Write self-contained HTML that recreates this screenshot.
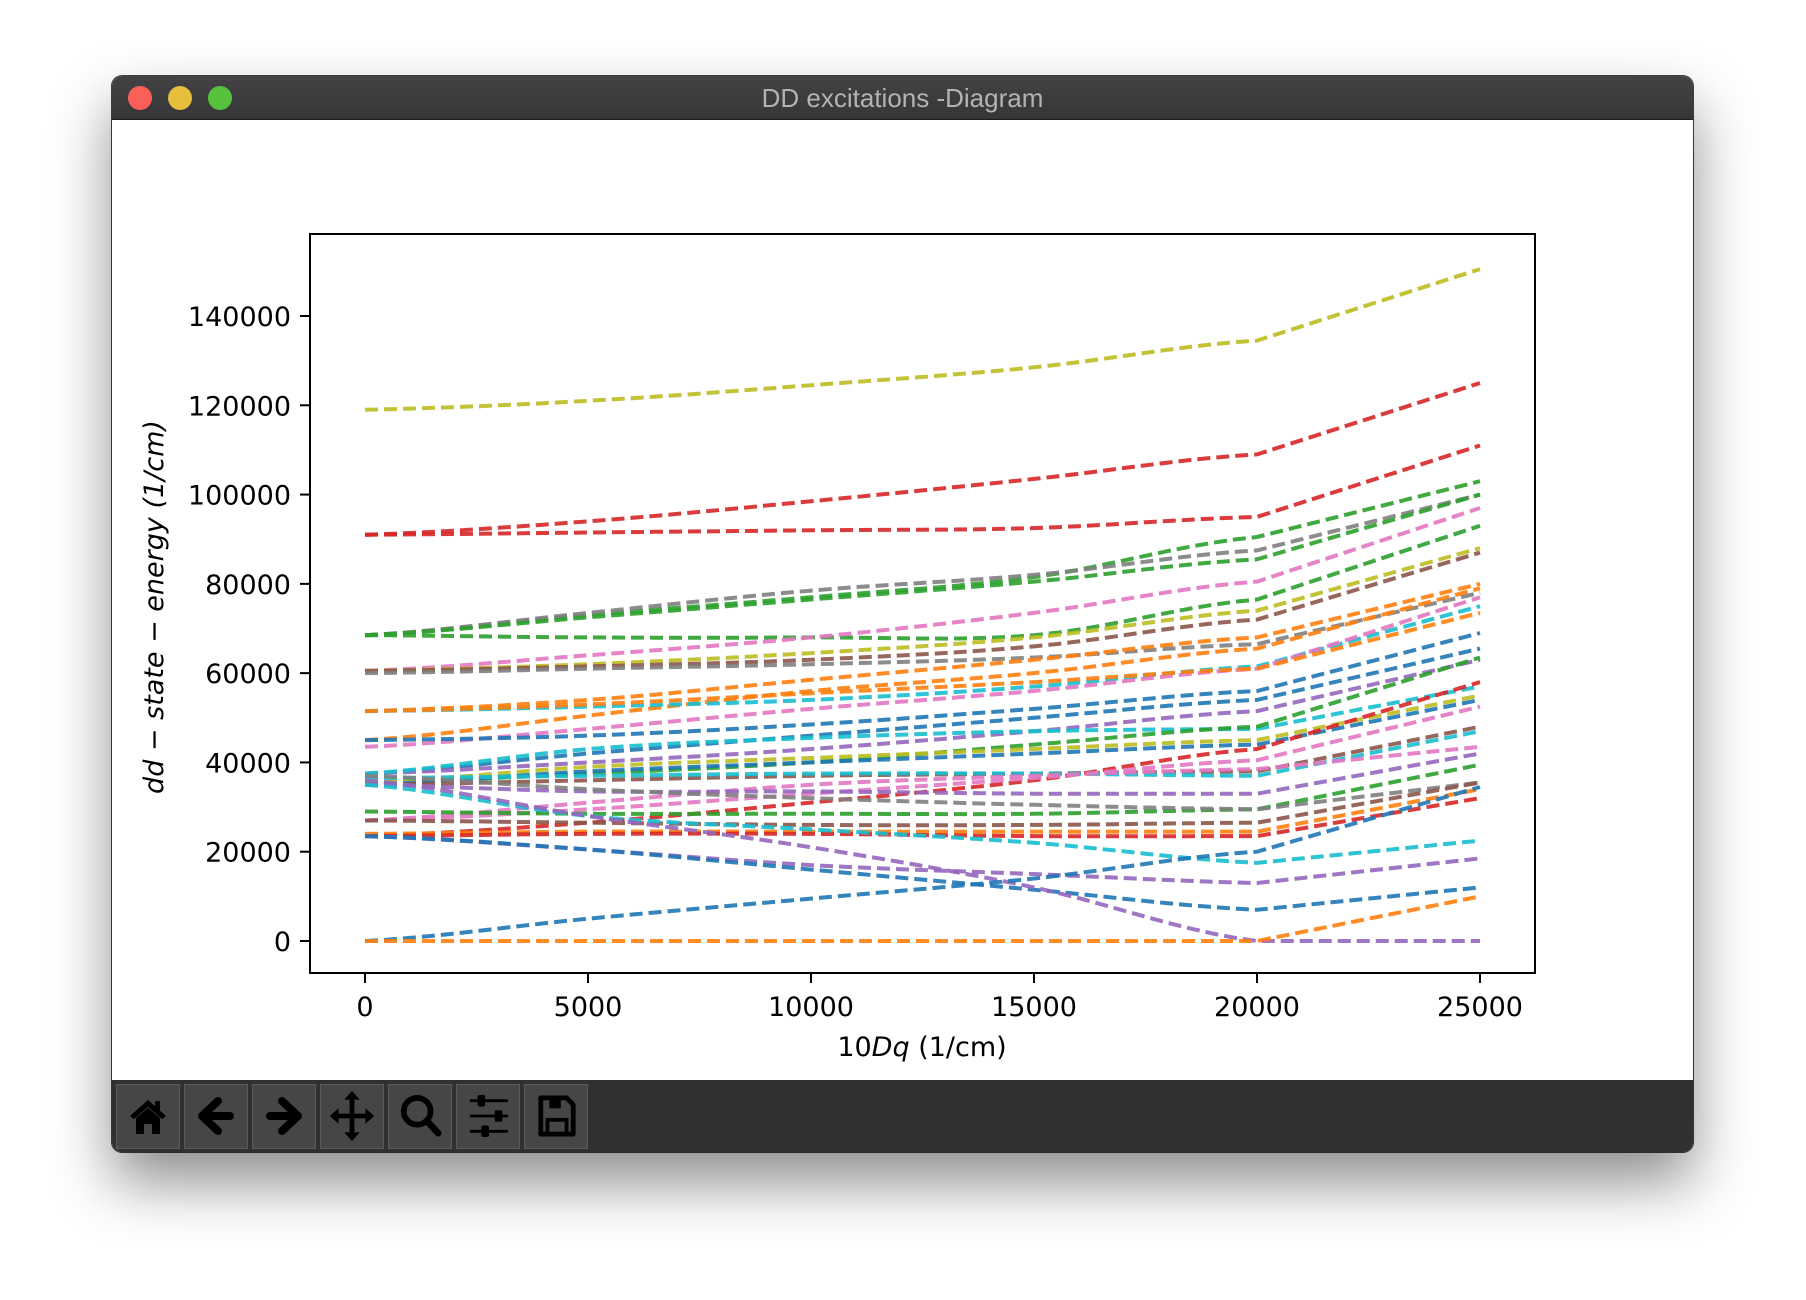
<!DOCTYPE html>
<html><head><meta charset="utf-8">
<style>
html,body{margin:0;padding:0;width:1806px;height:1300px;background:#fff;overflow:hidden;font-family:"DejaVu Sans","Liberation Sans",sans-serif}
.win{position:absolute;left:112px;top:76px;width:1581px;height:1076px;background:#fff;border-radius:10px;overflow:hidden;box-shadow:0 30px 60px rgba(0,0,0,0.45),0 0 0 1px #444}
.tb{position:absolute;left:0;top:0;width:100%;height:43px;background:linear-gradient(#434345,#363638);border-bottom:1px solid #1c1c1c}
.dot{position:absolute;top:10px;width:24px;height:24px;border-radius:50%}
.title{position:absolute;left:0;right:0;top:7px;text-align:center;color:#b3b3b3;font:26px "Liberation Sans",sans-serif}
.bar{position:absolute;left:0;bottom:0;width:100%;height:72px;background:#303030}
.btn{position:absolute;top:4px;width:62px;height:63px;background:#464646;border:1px solid #5a5a5a}
.btn svg{position:absolute;left:11px;top:11px}
</style></head><body>
<div class="win">
 <div class="tb">
  <div class="dot" style="left:16px;background:#fc5f57"></div>
  <div class="dot" style="left:56px;background:#e6bf3c"></div>
  <div class="dot" style="left:96px;background:#58c13b"></div>
  <div class="title">DD excitations -Diagram</div>
 </div>
 <div class="bar">
  <div class="btn" style="left:4px"><svg width="40" height="40" viewBox="0 0 40 40"><path d="M2 20 L20 4 L38 20 L34 23 L20 11 L6 23Z" fill="#000"/><rect x="27" y="5" width="5" height="10" fill="#000"/><path d="M8 22 L20 12 L32 22 V38 H24 V28 H16 V38 H8Z" fill="#000"/></svg></div>
  <div class="btn" style="left:72px"><svg width="40" height="40" viewBox="0 0 40 40"><path d="M22 5 L6 20 L22 35" stroke="#000" stroke-width="8" fill="none" stroke-linecap="round" stroke-linejoin="round"/><path d="M8 20 H34" stroke="#000" stroke-width="8" stroke-linecap="round"/></svg></div>
  <div class="btn" style="left:140px"><svg width="40" height="40" viewBox="0 0 40 40"><path d="M18 5 L34 20 L18 35" stroke="#000" stroke-width="8" fill="none" stroke-linecap="round" stroke-linejoin="round"/><path d="M6 20 H32" stroke="#000" stroke-width="8" stroke-linecap="round"/></svg></div>
  <div class="btn" style="left:208px"><svg width="46" height="50" viewBox="0 0 46 52" style="left:8px;top:6px"><path d="M23 4 V48 M2 26 H44" stroke="#000" stroke-width="5"/><path d="M23 0 L31 9 H15Z M23 52 L31 43 H15Z M0 26 L9 18 V34Z M46 26 L37 18 V34Z" fill="#000"/></svg></div>
  <div class="btn" style="left:276px"><svg width="44" height="44" viewBox="0 0 44 46" style="left:10px;top:9px"><circle cx="18" cy="18" r="14" stroke="#000" stroke-width="6" fill="none"/><path d="M28 28 L40 41" stroke="#000" stroke-width="7" stroke-linecap="round"/></svg></div>
  <div class="btn" style="left:344px"><svg width="40" height="42" viewBox="0 0 40 44" style="left:12px;top:10px"><path d="M0 6 H40 M0 22 H40 M0 38 H40" stroke="#000" stroke-width="3"/><rect x="8" y="0" width="8" height="12" rx="2"/><rect x="26" y="16" width="8" height="12" rx="2"/><rect x="12" y="32" width="8" height="12" rx="2"/></svg></div>
  <div class="btn" style="left:412px"><svg width="40" height="42" viewBox="0 0 40 44" style="left:12px;top:10px"><path d="M3 3 H30 L37 10 V41 H3Z" stroke="#000" stroke-width="5" fill="none" stroke-linejoin="round"/><rect x="12" y="3" width="12" height="11" fill="#000"/><rect x="10" y="26" width="20" height="15" stroke="#000" stroke-width="4" fill="none"/></svg></div>
 </div>
</div>
<svg id="plot" width="1806" height="1300" style="position:absolute;left:0;top:0" xmlns="http://www.w3.org/2000/svg">
 <g id="lines"></g>
 <rect x="310" y="234" width="1225" height="739" fill="none" stroke="#000" stroke-width="2"/>
 <g id="ticks" font-size="27" fill="#000"></g>
 <text x="922" y="1056" font-size="27" text-anchor="middle">10<tspan font-style="italic">Dq</tspan> (1/cm)</text>
 <text transform="translate(163,607) rotate(-90)" font-size="27" text-anchor="middle" font-style="italic">dd − state − energy (1/cm)</text>
</svg>
<script>
var X=function(v){return 365+v*223/5;},Y=function(v){return 941-v*625/140;};
var C={b:"#1f77b4",o:"#ff7f0e",g:"#2ca02c",r:"#d62728",p:"#9467bd",n:"#8c564b",k:"#e377c2",a:"#7f7f7f",y:"#bcbd22",c:"#17becf"};
var D=[["y",119,121,124.5,128.5,134.5,150.5],["r",91,94,98.5,103.5,109,125],["r",91,91.5,92,92.5,95,111],
["g",68.5,73,77,81.5,90.5,103],["a",68.5,73.5,78.5,82,87.5,100],["g",68.5,72.5,76.5,80.5,85.5,100],["g",68.5,68,68,68.5,76.5,93],
["k",60.5,64,68,73.5,80.5,97],["y",60.5,62,64.5,68,74,88],["n",60.5,61.5,63,66,72,87],["a",60,61,62,63.5,66.5,78],
["o",51.5,54,58.5,63,68,80],["o",45,50.5,56,60,65.5,79],["c",51.5,52.5,54,57,61.5,75],["k",43.5,47.5,52,56,61,77],["o",51.5,53,55.5,58,61,73.5],
["b",45,46,48.5,52,56,69],["b",37.5,42,46,50,54,65.5],["p",37.5,40,43,47,51.5,63],["c",37.5,43,45.5,47,47.5,57],["g",35.5,37.5,40,44,48,63.5],
["y",35.5,39,41,43,45,55],["b",35,38,40,42,44,54],["r",23.5,26.5,31,36,43,58],["n",35,36,37,37.5,38,48],["k",27,29.5,33,36.5,40.5,52.5],
["c",36.5,37,37.5,37.5,37,47],["k",27,31,35,37,38.5,43.5],["p",35,33.5,33.5,33,33,42],["g",29,28.5,28.5,28.5,29.5,39.5],
["a",37,34,32,30.5,29.5,35.5],["n",27,26.5,26,26,26.5,35.5],["o",24,24.5,24.5,24.5,24.5,34],["r",23.5,24,24,23.5,23.5,32],
["c",35,28,25,22,17.5,22.5],["p",23.5,20.5,17,15,13,18.5],["b",23.5,20.5,16,11.5,7,12],["p",36,28,21,12,0,0],["b",0,5,9.5,14,20,34.5],["o",0,0,0,0,0,10]];
var h="";D.forEach(function(d){var p="M"+X(0)+" "+Y(d[1]).toFixed(1);
for(var s=1;s<=40;s++){var u=s/40*4;var i=Math.min(3,Math.floor(u)),f=u-i;
var p0=d[Math.max(1,i)],p1=d[i+1],p2=d[i+2],p3=d[Math.min(5,i+3)];
var v=0.5*((2*p1)+(-p0+p2)*f+(2*p0-5*p1+4*p2-p3)*f*f+(-p0+3*p1-3*p2+p3)*f*f*f);
p+="L"+X(u*5).toFixed(1)+" "+Y(v).toFixed(1);}
p+="L"+X(25)+" "+Y(d[6]).toFixed(1);
h+='<path d="'+p+'" fill="none" stroke="'+C[d[0]]+'" stroke-opacity="0.9" stroke-width="4" stroke-dasharray="13 6"/>';});
document.getElementById("lines").innerHTML=h;
var t="";for(var v=0;v<=140;v+=20){var y=Y(v);t+='<line x1="300" x2="310" y1="'+y+'" y2="'+y+'" stroke="#000" stroke-width="2"/><text x="291" y="'+(y+10)+'" text-anchor="end">'+(v?v+"000":"0")+'</text>';}
for(var x=0;x<=25;x+=5){var xx=X(x);t+='<line x1="'+xx+'" x2="'+xx+'" y1="973" y2="983" stroke="#000" stroke-width="2"/><text x="'+xx+'" y="1016" text-anchor="middle">'+(x?x+"000":"0")+'</text>';}
document.getElementById("ticks").innerHTML=t;
</script>
</body></html>
